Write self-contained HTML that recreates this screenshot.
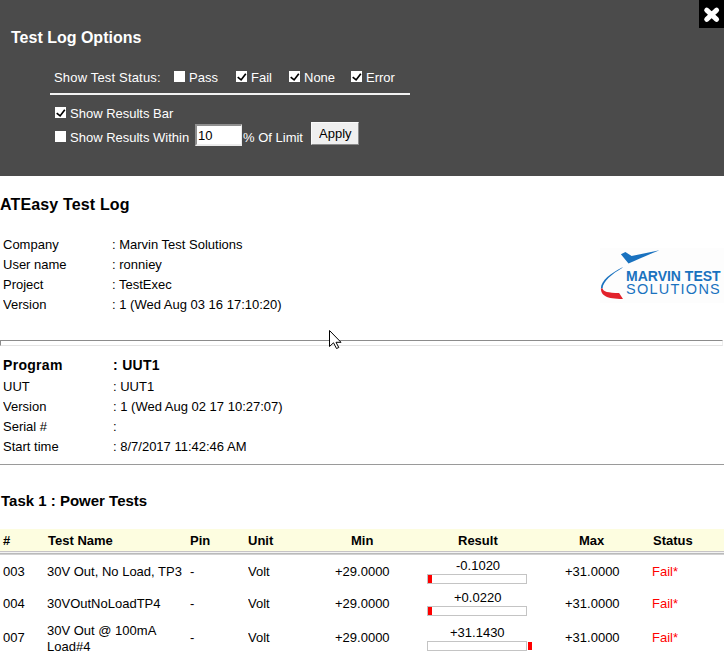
<!DOCTYPE html>
<html><head><meta charset="utf-8">
<style>
*{margin:0;padding:0;box-sizing:border-box}
html,body{width:724px;height:656px;overflow:hidden;background:#fff}
body{position:relative;font-family:"Liberation Sans",sans-serif;font-size:13px;color:#000}
.a{position:absolute;white-space:nowrap;line-height:16px}
.s{font-size:13.5px;transform:scaleX(0.963);transform-origin:0 0}
#panel{position:absolute;left:0;top:0;width:724px;height:176px;background:#4b4b4b;color:#fff}
#close{position:absolute;left:699px;top:0;width:25px;height:28px;background:#000}
.cb{position:absolute;width:11px;height:11px;background:#fff}
.cb svg{position:absolute;left:0;top:0}
.b{font-weight:bold}
.hr1{position:absolute;left:0;top:340px;width:723px;height:6px;border-top:1px solid #8c8c8c;border-left:1px solid #8c8c8c;border-bottom:1px solid #e4e4e4;border-right:1px solid #eeeeee}
.hr2{position:absolute;left:0;top:464px;width:724px;height:1px;background:#9a9a9a}
.thbg{position:absolute;left:0;top:529px;width:724px;height:22px;background:#fdfde0}
.thline{position:absolute;left:0;top:551px;width:724px;height:4px;background:linear-gradient(to bottom,#c6c3c6 0,#c6c3c6 1px,#f3f3f3 1px,#f3f3f3 2px,#bababa 2px,#bababa 3px,#d2d2d2 3px,#d2d2d2 4px)}
.bar{position:absolute;left:427px;width:100px;height:10px;border:1px solid #c4c4c4;background:#fff}
.red{position:absolute;width:4px;height:8px;background:#f00}
.fail{color:#f00}
</style></head><body>
<div id="panel">
  <div class="a b" style="left:11px;top:29px;font-size:16px;line-height:18px">Test Log Options</div>
  <div id="close"><svg width="25" height="28" viewBox="0 0 25 28"><path d="M7.7 10.2 L17.6 19.4 M17.6 10.2 L7.7 19.4" stroke="#fff" stroke-width="5" stroke-linecap="round"/></svg></div>
  <div class="a s" style="left:54px;top:70px;letter-spacing:0.18px">Show Test Status:</div>
  <div class="cb" style="left:174px;top:71px"></div>
  <div class="a s" style="left:189px;top:70px">Pass</div>
  <div class="cb" style="left:236px;top:71px"><svg width="11" height="11"><path d="M1.7 6.2 L5.1 8.9 L9.8 2.7" stroke="#000" stroke-width="1.7" fill="none"/></svg></div>
  <div class="a s" style="left:251px;top:70px">Fail</div>
  <div class="cb" style="left:289px;top:71px"><svg width="11" height="11"><path d="M1.7 6.2 L5.1 8.9 L9.8 2.7" stroke="#000" stroke-width="1.7" fill="none"/></svg></div>
  <div class="a s" style="left:304px;top:70px">None</div>
  <div class="cb" style="left:351px;top:71px"><svg width="11" height="11"><path d="M1.7 6.2 L5.1 8.9 L9.8 2.7" stroke="#000" stroke-width="1.7" fill="none"/></svg></div>
  <div class="a s" style="left:366px;top:70px">Error</div>
  <div style="position:absolute;left:50px;top:93px;width:360px;height:2px;background:#f2f2f2"></div>
  <div class="cb" style="left:55px;top:107px"><svg width="11" height="11"><path d="M1.7 6.2 L5.1 8.9 L9.8 2.7" stroke="#000" stroke-width="1.7" fill="none"/></svg></div>
  <div class="a s" style="left:70px;top:106px">Show Results Bar</div>
  <div class="cb" style="left:55px;top:131px"></div>
  <div class="a s" style="left:70px;top:130px">Show Results Within</div>
  <div style="position:absolute;left:195px;top:124px;width:47px;height:22px;background:#fff;border:2px solid #8f8f8f;border-right-color:#ececec;border-bottom-color:#ececec;border-right-width:1px"></div>
  <div class="a s" style="left:198px;top:128px;color:#000">10</div>
  <div class="a s" style="left:243px;top:130px">% Of Limit</div>
  <div style="position:absolute;left:311px;top:122px;width:48px;height:23px;background:#efefef;border:1px solid #fafafa;border-right-color:#8a8a8a;border-bottom-color:#8a8a8a"></div>
  <div class="a s" style="left:319px;top:126px;color:#000">Apply</div>
</div>

<div class="a b" style="left:0px;top:196px;font-size:16px;line-height:18px;letter-spacing:0.15px">ATEasy Test Log</div>
<div class="a s" style="left:3px;top:237px">Company</div>
<div class="a s" style="left:112px;top:237px">: Marvin Test Solutions</div>
<div class="a s" style="left:3px;top:257px">User name</div>
<div class="a s" style="left:112px;top:257px">: ronniey</div>
<div class="a s" style="left:3px;top:277px">Project</div>
<div class="a s" style="left:112px;top:277px">: TestExec</div>
<div class="a s" style="left:3px;top:297px">Version</div>
<div class="a s" style="left:112px;top:297px">: 1 (Wed Aug 03 16 17:10:20)</div>

<div style="position:absolute;left:600px;top:248px;width:124px;height:55px;background:#fdfdfd"></div>
<div class="hr1"></div>
<div class="a b" style="left:626px;top:268px;font-size:14px;letter-spacing:0px;color:#1a72bf">MARVIN TEST</div>
<div class="a" style="left:626px;top:281px;font-size:14.5px;letter-spacing:1.25px;color:#1a72bf">SOLUTIONS</div>

<div class="a b" style="left:3px;top:357px;font-size:14px;line-height:17px;letter-spacing:0.3px">Program</div>
<div class="a b" style="left:113px;top:357px;font-size:14px;line-height:17px;letter-spacing:0.3px">: UUT1</div>
<div class="a s" style="left:3px;top:379px">UUT</div>
<div class="a s" style="left:113px;top:379px">: UUT1</div>
<div class="a s" style="left:3px;top:399px">Version</div>
<div class="a s" style="left:113px;top:399px">: 1 (Wed Aug 02 17 10:27:07)</div>
<div class="a s" style="left:3px;top:419px">Serial #</div>
<div class="a s" style="left:113px;top:419px">:</div>
<div class="a s" style="left:3px;top:439px">Start time</div>
<div class="a s" style="left:113px;top:439px">: 8/7/2017 11:42:46 AM</div>

<div class="hr2"></div>

<div class="a b" style="left:1px;top:492px;font-size:15px;line-height:17px">Task 1 : Power Tests</div>

<div class="thbg"></div>
<div class="thline"></div>
<div class="a b" style="left:3px;top:533px">#</div>
<div class="a b" style="left:48px;top:533px">Test Name</div>
<div class="a b" style="left:190px;top:533px">Pin</div>
<div class="a b" style="left:248px;top:533px">Unit</div>
<div class="a b" style="left:351px;top:533px">Min</div>
<div class="a b" style="left:458px;top:533px">Result</div>
<div class="a b" style="left:579px;top:533px">Max</div>
<div class="a b" style="left:653px;top:533px">Status</div>

<div class="a s" style="left:3px;top:564px">003</div>
<div class="a s" style="left:47px;top:564px">30V Out, No Load, TP3</div>
<div class="a s" style="left:190px;top:564px">-</div>
<div class="a s" style="left:248px;top:564px">Volt</div>
<div class="a s" style="left:335px;top:564px">+29.0000</div>
<div class="a s" style="left:456px;top:558px">-0.1020</div>
<div class="bar" style="top:574px"></div><div class="red" style="left:428px;top:575px"></div>
<div class="a s" style="left:565px;top:564px">+31.0000</div>
<div class="a s fail" style="left:652px;top:564px">Fail*</div>

<div class="a s" style="left:3px;top:596px">004</div>
<div class="a s" style="left:47px;top:596px">30VOutNoLoadTP4</div>
<div class="a s" style="left:190px;top:596px">-</div>
<div class="a s" style="left:248px;top:596px">Volt</div>
<div class="a s" style="left:335px;top:596px">+29.0000</div>
<div class="a s" style="left:454px;top:590px">+0.0220</div>
<div class="bar" style="top:606px"></div><div class="red" style="left:428px;top:607px"></div>
<div class="a s" style="left:565px;top:596px">+31.0000</div>
<div class="a s fail" style="left:652px;top:596px">Fail*</div>

<div class="a s" style="left:3px;top:630px">007</div>
<div class="a s" style="left:47px;top:623px">30V Out @ 100mA</div>
<div class="a s" style="left:47px;top:639px">Load#4</div>
<div class="a s" style="left:190px;top:630px">-</div>
<div class="a s" style="left:248px;top:630px">Volt</div>
<div class="a s" style="left:335px;top:630px">+29.0000</div>
<div class="a s" style="left:450px;top:625px">+31.1430</div>
<div class="bar" style="top:641px"></div><div class="red" style="left:528px;top:642px"></div>
<div class="a s" style="left:565px;top:630px">+31.0000</div>
<div class="a s fail" style="left:652px;top:630px">Fail*</div>

<svg style="position:absolute;left:0;top:0" width="724" height="656">
<path d="M620.9,254.3 L625.4,251.9 L631.6,256 L659.5,250.2 C650,254 640,258.5 628.5,263.6 Z" fill="#1a72bf"/>
<path d="M622.5,267.2 C611,273 600.8,280.5 600.9,288.5 L602.6,288.5 C602.8,281.5 612,274 622.5,267.8 Z" fill="#1a72bf"/>
<path d="M600.9,288.5 C601,295.5 606,298.8 623,299 L619.1,293 C608,293 603,291.5 602.6,288.5 Z" fill="#e2222b"/>
<path d="M329.5,330.5 L329.5,346.5 L333.5,342.8 L336.5,348.5 L338.8,347.5 L336,342.3 L341,342.3 Z" fill="#fff" stroke="#000" stroke-width="1" stroke-linejoin="miter"/>
</svg>
</body></html>
